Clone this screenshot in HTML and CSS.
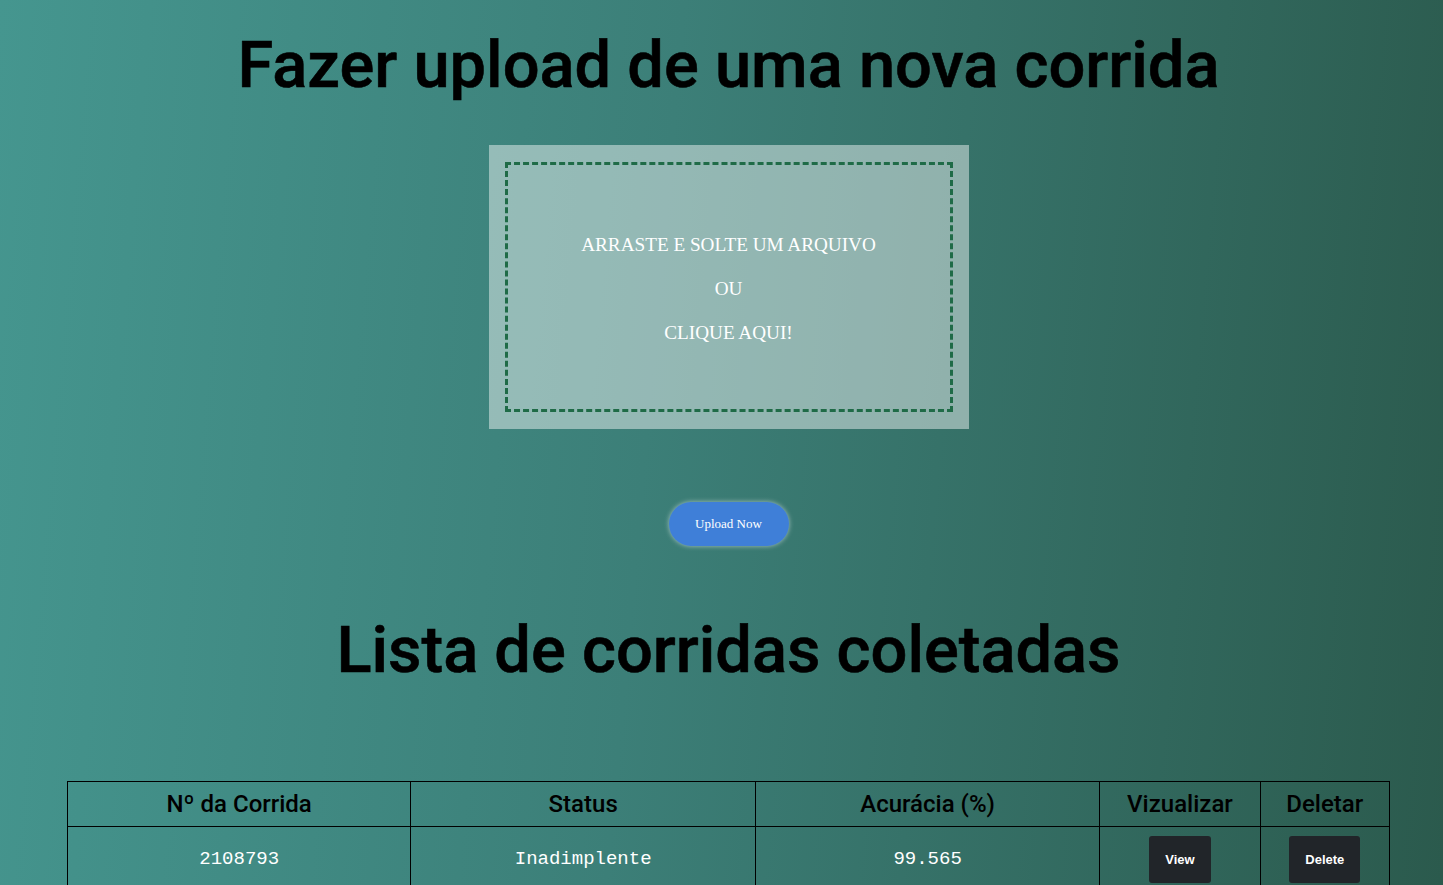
FILE: index.html
```html
<!DOCTYPE html>
<html lang="pt">
<head>
<meta charset="utf-8">
<title>Upload de corridas</title>
<link rel="stylesheet" href="styles.css">
</head>
<body>
<main class="page">
  <h1 class="title">Fazer upload de uma nova corrida</h1>
  <section class="dropzone">
    <div class="dropzone-inner">
      <p>ARRASTE E SOLTE UM ARQUIVO</p>
      <p>OU</p>
      <p>CLIQUE AQUI!</p>
    </div>
  </section>
  <div class="upload-row">
    <button class="upload-btn">Upload Now</button>
  </div>
  <h1 class="title title-list">Lista de corridas coletadas</h1>
  <table class="runs">
    <thead>
      <tr>
        <th class="c-num">Nº da Corrida</th>
        <th class="c-status">Status</th>
        <th class="c-acc">Acurácia (%)</th>
        <th class="c-view">Vizualizar</th>
        <th class="c-del">Deletar</th>
      </tr>
    </thead>
    <tbody>
      <tr>
        <td>2108793</td>
        <td>Inadimplente</td>
        <td>99.565</td>
        <td><button class="dark-btn">View</button></td>
        <td><button class="dark-btn">Delete</button></td>
      </tr>
      <tr>
        <td>2108794</td>
        <td>Adimplente</td>
        <td>98.120</td>
        <td><button class="dark-btn">View</button></td>
        <td><button class="dark-btn">Delete</button></td>
      </tr>
    </tbody>
  </table>
</main>
</body>
</html>
```

FILE: styles.css
```css
html, body {
  margin: 0;
  padding: 0;
}

body {
  min-height: 100vh;
  background: linear-gradient(95deg, #45968f 0%, #3c7f78 45%, #2b5a4d 100%);
  background-attachment: fixed;
  font-family: Roboto, "Open Sans", sans-serif;
}

.page {
  padding-left: 14px;
  display: flex;
  flex-direction: column;
  align-items: center;
}

.title {
  margin: 25px 0 0;
  font-family: Roboto, "Open Sans", sans-serif;
  font-weight: 500;
  font-size: 65px;
  line-height: 80px;
  color: #000;
  text-align: center;
  -webkit-text-stroke: 0.6px #000;
}

.dropzone {
  margin-top: 40px;
  width: 480px;
  height: 284px;
  box-sizing: border-box;
  padding: 17px 16px 17px 16px;
  background: rgba(255, 255, 255, 0.45);
  display: flex;
}

.dropzone-inner {
  flex: 1;
  border: 3px dashed #1f6b47;
  display: flex;
  flex-direction: column;
  align-items: center;
  justify-content: center;
  padding-top: 4px;
  color: #fff;
  font-family: "Liberation Serif", "Times New Roman", serif;
  font-size: 19.2px;
}

.dropzone-inner p {
  margin: 0;
  line-height: 44px;
}

.upload-row {
  margin-top: 73px;
}

.upload-btn {
  width: 120px;
  height: 44px;
  border: none;
  border-radius: 22px;
  background: #3f7fd8;
  color: #fff;
  font-family: "Liberation Serif", "Times New Roman", serif;
  font-size: 13px;
  box-shadow: 0 0 5px rgba(255, 255, 255, 0.55);
}

.title-list {
  margin-top: 64px;
}

.runs {
  margin-top: 91px;
  width: 1323px;
  border-collapse: collapse;
  table-layout: fixed;
}

.runs th, .runs td {
  border: 1px solid #000;
  text-align: center;
}

.runs th {
  height: 44px;
  padding: 0;
  font-family: Roboto, "Open Sans", sans-serif;
  font-weight: 500;
  font-size: 24px;
  color: #000;
}

.c-num { width: 26%; }
.c-status { width: 26.08%; }
.c-acc { width: 26.08%; }
.c-view { width: 12.09%; }
.c-del { width: 9.75%; }

.runs td {
  padding: 8px 0;
  font-family: "Liberation Mono", "Courier New", monospace;
  font-size: 19px;
  color: #fff;
}

.dark-btn {
  padding: 16px 16px;
  border: none;
  border-radius: 3px;
  background: #212529;
  color: #fff;
  font-family: "Liberation Sans", Arial, sans-serif;
  font-weight: 700;
  font-size: 13px;
  line-height: 15px;
  margin-top: 1px;
}
```
